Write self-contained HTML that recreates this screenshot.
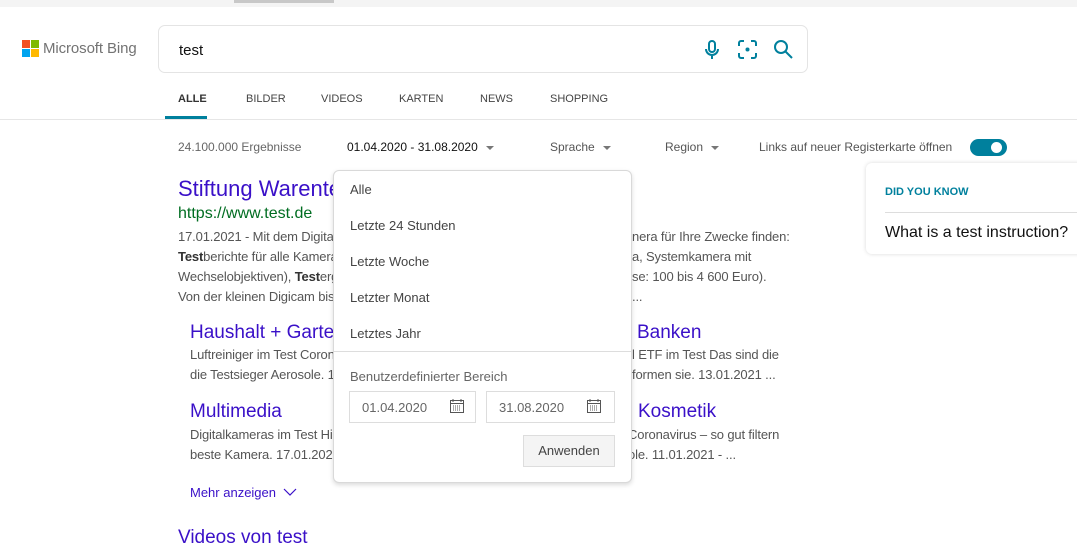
<!DOCTYPE html>
<html><head><meta charset="utf-8"><style>
*{margin:0;padding:0;box-sizing:border-box}
body{width:1077px;height:543px;overflow:hidden;background:#fff;font-family:"Liberation Sans",Arial,sans-serif;position:relative;color:#444}
.a{position:absolute;white-space:nowrap}
.sn{font-size:13px;color:#555;line-height:20px;letter-spacing:-0.15px}
.t{color:#3a10c8}
b{color:#333}
.dd div.i{position:absolute;left:16px;font-size:13px;color:#444}
.arr{display:inline-block;width:0;height:0;border-left:4px solid transparent;border-right:4px solid transparent;border-top:4px solid #777;vertical-align:middle;margin-left:8px}
</style></head><body>
<div class="a" style="left:0;top:0;width:1077px;height:7px;background:#f4f4f4"></div>
<div class="a" style="left:234px;top:0;width:100px;height:3px;background:#c8c8c8"></div>
<div class="a" style="left:22px;top:40px;width:8px;height:8px;background:#f25022"></div>
<div class="a" style="left:31px;top:40px;width:8px;height:8px;background:#7fba00"></div>
<div class="a" style="left:22px;top:49px;width:8px;height:8px;background:#00a4ef"></div>
<div class="a" style="left:31px;top:49px;width:8px;height:8px;background:#ffb900"></div>
<div class="a" style="left:43px;top:40px;font-size:15px;color:#737373;letter-spacing:-0.1px">Microsoft Bing</div>
<div class="a" style="left:158px;top:25px;width:650px;height:48px;border:1px solid #e4e4e4;border-radius:7px"></div>
<div class="a" style="left:179px;top:42px;font-size:15px;color:#111">test</div>
<svg class="a" style="left:703px;top:39px" width="18" height="22" viewBox="0 0 18 22" fill="none" stroke="#00809d" stroke-width="2"><rect x="6" y="2" width="6" height="11" rx="3"/><path d="M3 10a6 6 0 0 0 12 0M9 16v4"/></svg>
<svg class="a" style="left:737px;top:39px" width="21" height="21" viewBox="0 0 21 21" fill="none" stroke="#00809d" stroke-width="2"><path d="M2 7V4a2 2 0 0 1 2-2h3M14 2h3a2 2 0 0 1 2 2v3M19 14v3a2 2 0 0 1-2 2h-3M7 19H4a2 2 0 0 1-2-2v-3"/><circle cx="10.5" cy="10.5" r="2" fill="#00809d" stroke="none"/></svg>
<svg class="a" style="left:773px;top:39px" width="21" height="21" viewBox="0 0 21 21" fill="none" stroke="#00809d" stroke-width="2"><circle cx="8" cy="8" r="6"/><path d="M12.5 12.5l6.5 6.5"/></svg>
<div class="a" style="top:93px;left:178px;font-size:11px;color:#333;font-weight:bold">ALLE</div>
<div class="a" style="top:93px;left:246px;font-size:11px;color:#444">BILDER</div>
<div class="a" style="top:93px;left:321px;font-size:11px;color:#444">VIDEOS</div>
<div class="a" style="top:93px;left:399px;font-size:11px;color:#444">KARTEN</div>
<div class="a" style="top:93px;left:480px;font-size:11px;color:#444">NEWS</div>
<div class="a" style="top:93px;left:550px;font-size:11px;color:#444">SHOPPING</div>
<div class="a" style="left:0;top:119px;width:1077px;height:1px;background:#e6e6e6"></div>
<div class="a" style="left:165px;top:116px;width:42px;height:3px;background:#00809d"></div>
<div class="a" style="left:178px;top:140px;font-size:12px;color:#666">24.100.000 Ergebnisse</div>
<div class="a" style="left:347px;top:140px;font-size:12px;color:#111">01.04.2020 - 31.08.2020<span class="arr"></span></div>
<div class="a" style="left:550px;top:140px;font-size:12px;color:#555">Sprache<span class="arr"></span></div>
<div class="a" style="left:665px;top:140px;font-size:12px;color:#555">Region<span class="arr"></span></div>
<div class="a" style="left:759px;top:140px;font-size:12px;color:#555">Links auf neuer Registerkarte öffnen</div>
<div class="a" style="left:970px;top:139px;width:37px;height:17px;border-radius:9px;background:#00809d"></div>
<div class="a" style="left:991px;top:142px;width:11px;height:11px;border-radius:50%;background:#fff"></div>
<div class="a t" style="left:178px;top:176px;font-size:22px">Stiftung Warentest</div>
<div class="a" style="left:178px;top:205px;font-size:16px;color:#006d21">https://www.test.de</div>
<div class="a sn" style="left:178px;top:227px">17.01.2021 - Mit dem Digitalkamera-Test die beste Kamera für Ihre Zwecke finden:<br><b>Test</b>berichte für alle Kameratypen (Kompaktkamera, Systemkamera mit<br>Wechselobjektiven), <b>Test</b>ergebnisse für 400 Kameras (Preise: 100 bis 4 600 Euro).<br>Von der kleinen Digicam bis zur Profikamera. Jetzt finden ...</div>
<div class="a" style="left:631px;top:227px;background:#fff;width:170px;height:80px"></div>
<div class="a sn" style="left:632px;top:227px">nera für Ihre Zwecke finden:<br>a, Systemkamera mit<br>se: 100 bis 4 600 Euro).<br>...</div>
<div class="a t" style="left:190px;top:322px;font-size:19px">Haushalt + Garten</div>
<div class="a sn" style="left:190px;top:345px">Luftreiniger im Test Coronavirus<br>die Testsieger Aerosole. 13.01.2021</div>
<div class="a t" style="left:637px;top:322px;font-size:19px">Banken</div>
<div class="a sn" style="left:632px;top:345px">l ETF im Test Das sind die<br>formen sie. 13.01.2021 ...</div>
<div class="a t" style="left:190px;top:401px;font-size:19px">Multimedia</div>
<div class="a sn" style="left:190px;top:425px">Digitalkameras im Test Hier<br>beste Kamera. 17.01.2021</div>
<div class="a t" style="left:638px;top:401px;font-size:19px">Kosmetik</div>
<div class="a sn" style="left:628px;top:425px">Coronavirus – so gut filtern<br>ole. 11.01.2021 - ...</div>
<div class="a t" style="left:190px;top:485px;font-size:13px">Mehr anzeigen</div>
<svg class="a" style="left:283px;top:487px" width="14" height="10" viewBox="0 0 14 10" fill="none" stroke="#3a10c8" stroke-width="1.2"><path d="M1 2l6 6 6-6"/></svg>
<div class="a t" style="left:178px;top:527px;font-size:19px">Videos von test</div>
<div class="a dd" style="left:333px;top:170px;width:299px;height:313px;background:#fff;border:1px solid #d9d9d9;border-radius:6px;box-shadow:0 2px 5px rgba(0,0,0,.15)">
<div class="i" style="top:11px">Alle</div>
<div class="i" style="top:47px">Letzte 24 Stunden</div>
<div class="i" style="top:83px">Letzte Woche</div>
<div class="i" style="top:119px">Letzter Monat</div>
<div class="i" style="top:155px">Letztes Jahr</div>
<div style="position:absolute;left:0;top:180px;width:297px;height:1px;background:#ddd"></div>
<div class="i" style="top:198px;color:#666">Benutzerdefinierter Bereich</div>
<div style="position:absolute;left:15px;top:220px;width:127px;height:32px;border:1px solid #ddd"></div>
<div class="i" style="top:229px;left:28px;color:#666">01.04.2020</div>
<div style="position:absolute;left:152px;top:220px;width:129px;height:32px;border:1px solid #ddd"></div>
<div class="i" style="top:229px;left:165px;color:#666">31.08.2020</div>
<svg style="position:absolute;left:115px;top:227px" width="16" height="16" viewBox="0 0 16 16" fill="none" stroke="#555"><rect x="1.5" y="2.5" width="13" height="12"/><path d="M1.5 5.5h13M4 1v3M12 1v3" /><path d="M4 8h8M4 10h8M4 12h8" stroke-dasharray="1 1"/></svg>
<svg style="position:absolute;left:252px;top:227px" width="16" height="16" viewBox="0 0 16 16" fill="none" stroke="#555"><rect x="1.5" y="2.5" width="13" height="12"/><path d="M1.5 5.5h13M4 1v3M12 1v3" /><path d="M4 8h8M4 10h8M4 12h8" stroke-dasharray="1 1"/></svg>
<div style="position:absolute;left:189px;top:264px;width:92px;height:32px;border:1px solid #ddd;background:#f4f4f4;font-size:13px;color:#444;text-align:center;line-height:30px">Anwenden</div>
</div>
<div class="a" style="left:866px;top:163px;width:220px;height:91px;background:#fff;border-radius:6px;box-shadow:0 0 4px rgba(0,0,0,.15)"></div>
<div class="a" style="left:885px;top:186px;font-size:11px;font-weight:bold;color:#00809d">DID YOU KNOW</div>
<div class="a" style="left:885px;top:212px;width:200px;height:1px;background:#ddd"></div>
<div class="a" style="left:885px;top:224px;font-size:16px;color:#111">What is a test instruction?</div>
</body></html>
